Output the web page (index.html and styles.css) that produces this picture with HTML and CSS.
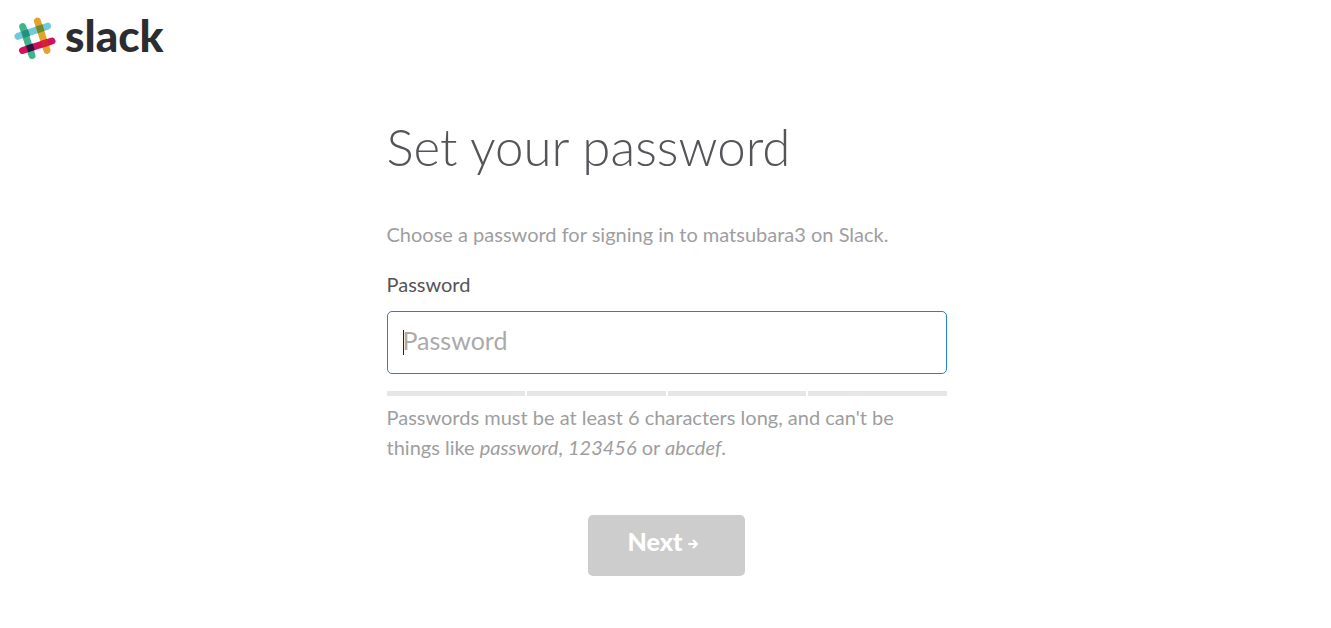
FILE: index.html
```
<!DOCTYPE html>
<html lang="en">
<head>
<meta charset="utf-8">
<meta name="viewport" content="width=device-width, initial-scale=1">
<title>Set your password</title>
<link rel="stylesheet" href="styles.css">
</head>
<body>
<header class="header">
  <a class="brand" href="#">
    <svg class="brand-mark" viewBox="14 17 42 43" aria-hidden="true">
      <g fill="none" stroke-width="7" stroke-linecap="round">
        <path stroke="#70cadb" d="M18 36.3 47.5 26.2"/>
        <path stroke="#e2a32f" d="M37.4 21 47 50.4"/>
        <path stroke="#3eb58a" d="M22.7 26.5 32 55.5"/>
        <path stroke="#d3105a" d="M22.5 50.5 52 41"/>
      </g>
      <path fill="#23907f" d="m21.5 31.5 6.500-2.200 2.200 6.400-6.600 2.300z"/>
      <path fill="#6f8a2a" d="m35.700 26.600 6.700-2.300 2.100 6.600-6.700 2.300z"/>
      <path fill="#2b1a40" d="m26 45.700 6.600-2.200 2.200 6.600-6.700 2.200z"/>
      <path fill="#d5232f" d="m40.700 41 6.600-2.100 2.100 6.500-6.600 2.200z"/>
    </svg>
    <span class="brand-name">slack</span>
  </a>
</header>
<main class="main">
  <h1 class="title">Set your password</h1>
  <p class="intro">Choose a password for signing in to matsubara3 on Slack.</p>
  <form class="form">
    <label class="label" for="password">Password</label>
    <div class="field">
      <input class="input" id="password" type="password" placeholder="Password">
      <span class="caret"></span>
    </div>
    <div class="meter" aria-hidden="true">
      <span class="meter-bar"></span><span class="meter-bar"></span><span class="meter-bar"></span><span class="meter-bar"></span>
    </div>
    <p class="hint">Passwords must be at least 6 characters long, and can't be things like <em>password</em>, <em>123456</em> or <em>abcdef</em>.</p>
    <button class="next" type="button">Next
      <svg class="arrow" viewBox="0 0 11 10" aria-hidden="true"><path d="M1 5h8M5.5 1.5 9 5 5.5 8.5"/></svg>
    </button>
  </form>
</main>
</body>
</html>
```
FILE: styles.css
```
* { box-sizing: border-box; }
body {
  margin: 0;
  background: #fff;
  color: #555459;
  font-family: Lato, "Open Sans", sans-serif;
  font-size: 20px;
  line-height: 30px;
}
.header { display: flex; padding: 12px 14px; }
.brand {
  display: flex;
  align-items: flex-start;
  gap: 9px;
  color: #2c2d30;
  text-decoration: none;
}
.brand-mark { width: 42px; height: 43px; margin-top: 5px; }
.brand-name { font-size: 44px; font-weight: 900; line-height: 46px; }
.main { max-width: 562px; margin: 0 auto; padding: 39px 0 40px 2px; }
.title {
  margin: 0 0 36px;
  font-size: 51px;
  font-weight: 300;
  line-height: 72px;
}
.intro { margin: 0 0 20px; color: #9e9ea0; }
.form { display: flex; flex-direction: column; }
.label { margin-bottom: 12px; }
.field { position: relative; }
.input {
  display: block;
  width: 100%;
  padding: 12px 15px 16px;
  border: 1px solid #2780d0;
  border-radius: 5px;
  outline: 0;
  background: #fff;
  color: #555459;
  font: inherit;
  font-size: 25px;
  line-height: 33px;
}
.input::placeholder { color: #aaa; opacity: 1; }
.caret {
  position: absolute;
  top: 19px;
  left: 16px;
  width: 1px;
  height: 25px;
  background: #222;
}
.meter { display: flex; gap: 2px; margin-top: 17px; }
.meter-bar { flex: 1; height: 5px; background: #e6e6e6; }
.hint { margin: 6px 0 53px; color: #9e9ea0; }
.next {
  display: flex;
  align-items: center;
  align-self: center;
  gap: 6px;
  padding: 9px 46px 18px 40px;
  border: 0;
  border-radius: 5px;
  background: #cdcdcd;
  color: #fff;
  font: inherit;
  font-size: 25px;
  font-weight: 900;
  line-height: 34px;
}
.arrow {
  width: 11px;
  height: 10px;
  margin-top: 6px;
  fill: none;
  stroke: #fff;
  stroke-width: 2;
  stroke-linecap: round;
  stroke-linejoin: round;
}
```
